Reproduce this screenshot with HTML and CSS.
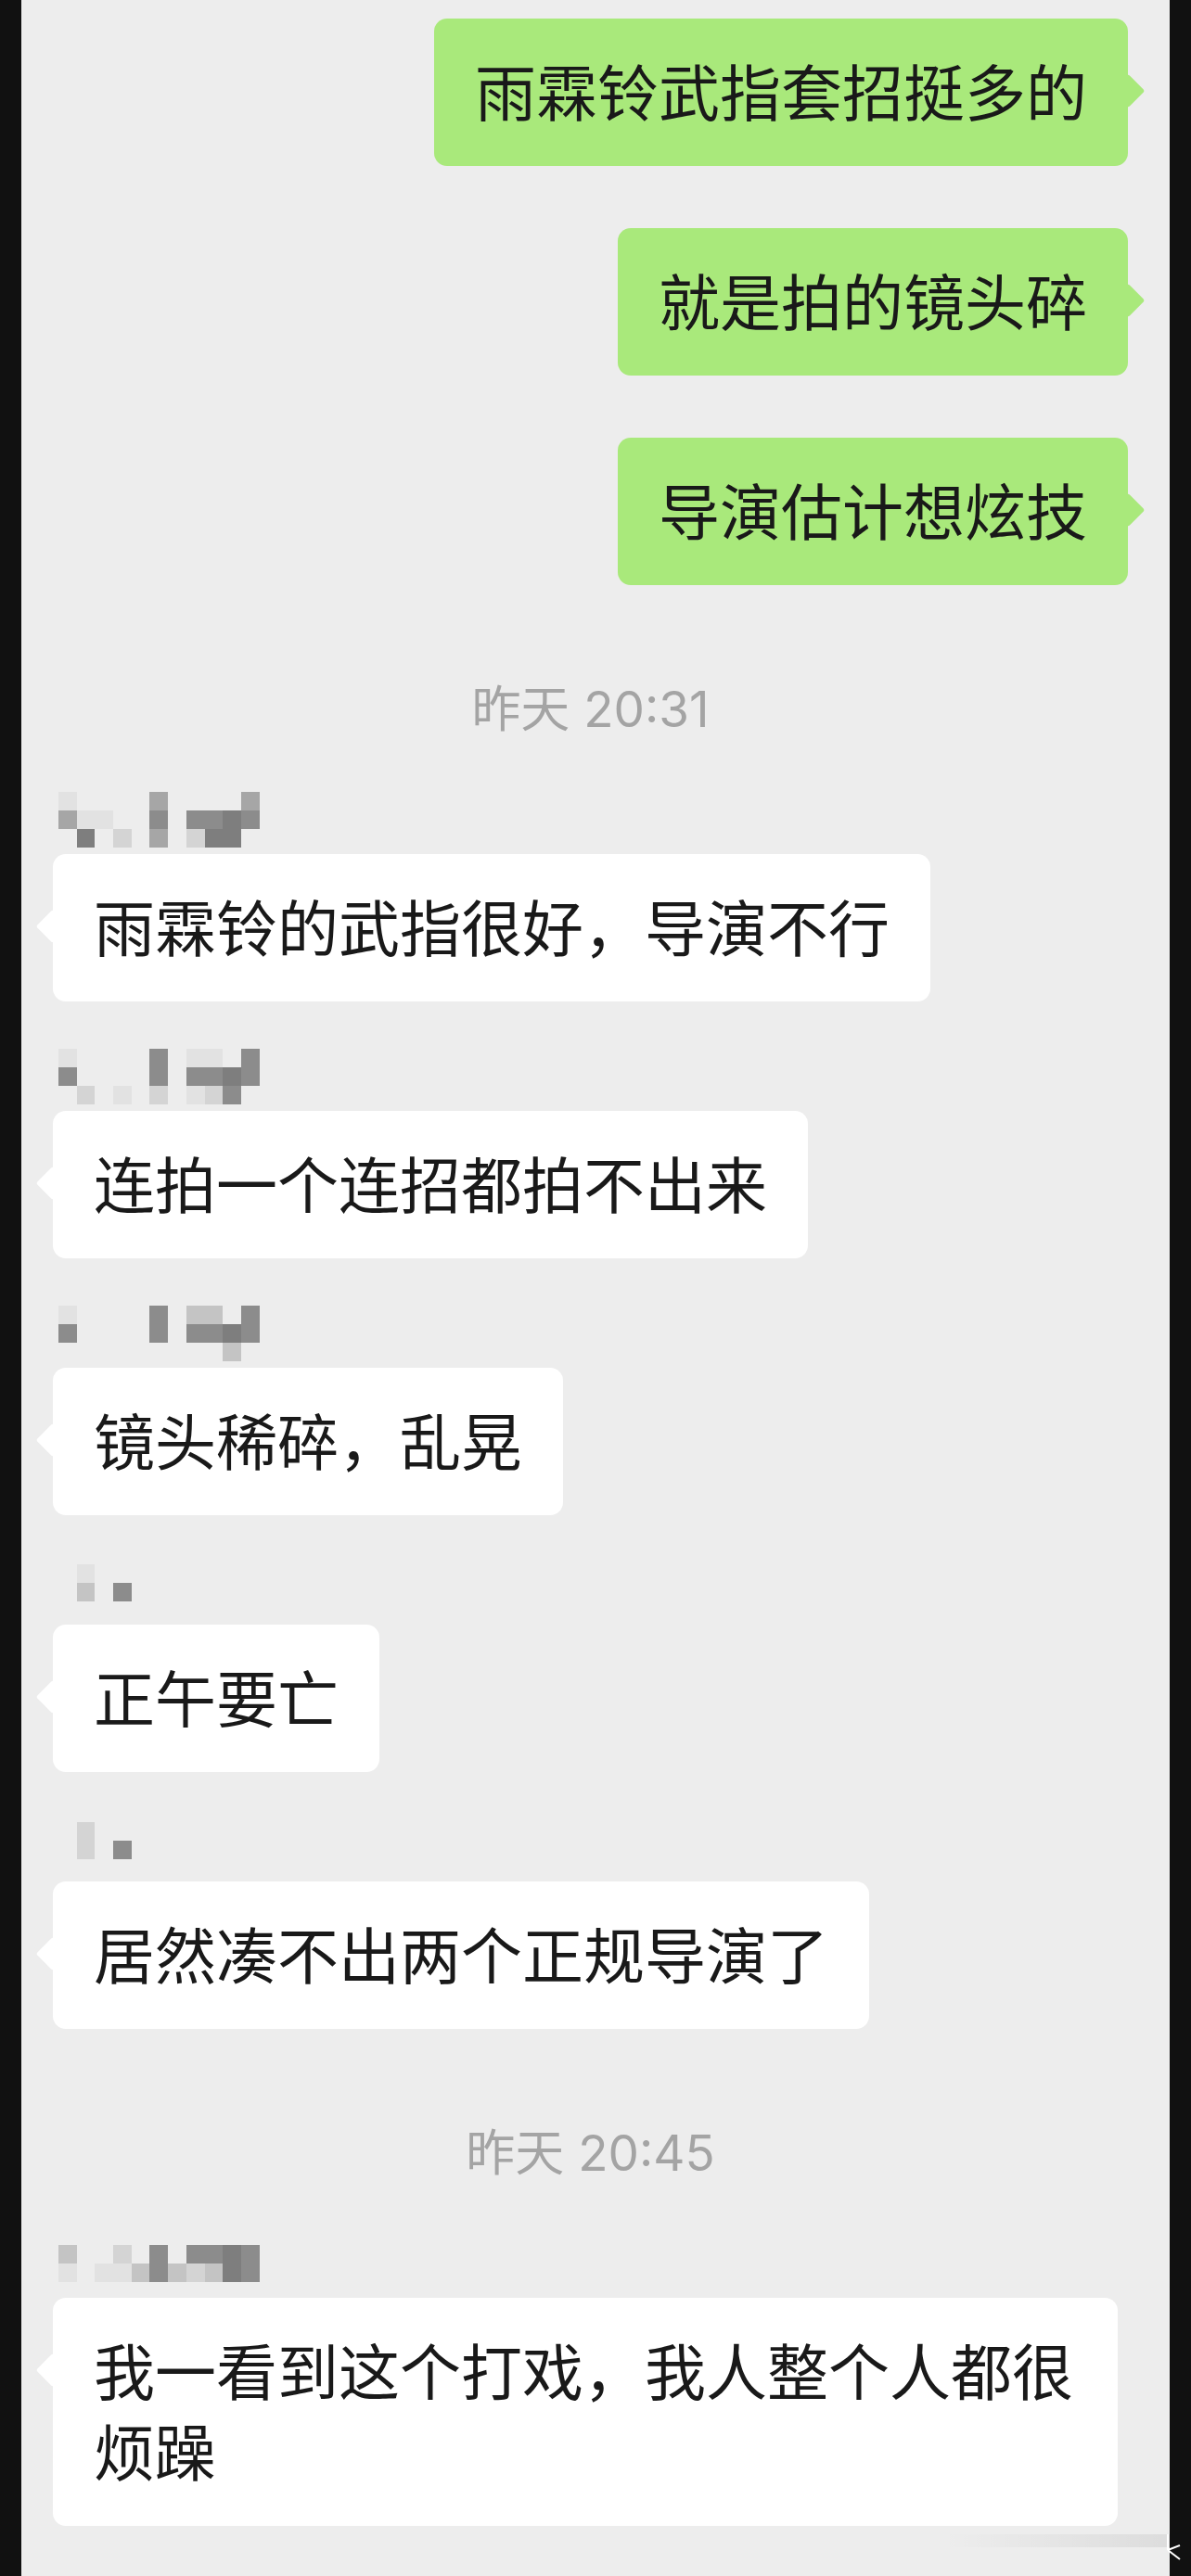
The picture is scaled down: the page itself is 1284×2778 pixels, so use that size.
FILE: index.html
```html
<!DOCTYPE html>
<html lang="zh-CN">
<head>
<meta charset="utf-8">
<title>聊天记录</title>
<link rel="stylesheet" href="styles.css">
</head>
<body>
<div class="screen">
  <div class="chat">
    <div class="msg-out"><div class="bubble green">雨霖铃武指套招挺多的</div></div>
    <div class="msg-out"><div class="bubble green">就是拍的镜头碎</div></div>
    <div class="msg-out"><div class="bubble green">导演估计想炫技</div></div>

    <div class="time">昨天 20:31</div>

    <div class="msg-in">
      <div class="name">
        <span class="k1"></span><span></span><span></span><span></span><span></span><span class="k4"></span><span></span><span></span><span></span><span></span><span class="k4"></span>
        <span class="k4"></span><span class="k1"></span><span class="k1"></span><span></span><span></span><span class="k5"></span><span></span><span class="k5"></span><span class="k5"></span><span class="k6"></span><span class="k5"></span>
        <span></span><span class="k6"></span><span></span><span class="k2"></span><span></span><span class="k4"></span><span></span><span class="k2"></span><span class="k6"></span><span class="k6"></span><span></span>
      </div>
      <div class="bubble white">雨霖铃的武指很好，导演不行</div>
    </div>

    <div class="msg-in">
      <div class="name">
        <span class="k1"></span><span></span><span></span><span></span><span></span><span class="k5"></span><span></span><span class="k1"></span><span class="k1"></span><span></span><span class="k5"></span>
        <span class="k5"></span><span></span><span></span><span></span><span></span><span class="k5"></span><span></span><span class="k5"></span><span class="k5"></span><span class="k6"></span><span class="k5"></span>
        <span></span><span class="k2"></span><span></span><span class="k1"></span><span></span><span class="k2"></span><span></span><span class="k1"></span><span class="k2"></span><span class="k5"></span><span></span>
      </div>
      <div class="bubble white">连拍一个连招都拍不出来</div>
    </div>

    <div class="msg-in">
      <div class="name">
        <span class="k1"></span><span></span><span></span><span></span><span></span><span class="k5"></span><span></span><span class="k3"></span><span class="k3"></span><span></span><span class="k5"></span>
        <span class="k5"></span><span></span><span></span><span></span><span></span><span class="k5"></span><span></span><span class="k5"></span><span class="k5"></span><span class="k6"></span><span class="k5"></span>
        <span></span><span></span><span></span><span></span><span></span><span></span><span></span><span></span><span></span><span class="k3"></span><span></span>
      </div>
      <div class="bubble white">镜头稀碎，乱晃</div>
    </div>

    <div class="msg-in">
      <div class="name off2">
        <span></span><span class="k1"></span><span></span><span></span><span></span><span></span><span></span><span></span><span></span><span></span><span></span>
        <span></span><span class="k3"></span><span></span><span class="k5"></span><span></span><span></span><span></span><span></span><span></span><span></span><span></span>
      </div>
      <div class="bubble white">正午要亡</div>
    </div>

    <div class="msg-in">
      <div class="name off3">
        <span></span><span class="k2"></span><span></span><span></span><span></span><span></span><span></span><span></span><span></span><span></span><span></span>
        <span></span><span class="k2"></span><span></span><span class="k5"></span><span></span><span></span><span></span><span></span><span></span><span></span><span></span>
      </div>
      <div class="bubble white">居然凑不出两个正规导演了</div>
    </div>

    <div class="time">昨天 20:45</div>

    <div class="msg-in">
      <div class="name off10">
        <span class="k3"></span><span></span><span></span><span class="k2"></span><span></span><span class="k5"></span><span></span><span class="k5"></span><span class="k5"></span><span class="k6"></span><span class="k5"></span>
        <span class="k1"></span><span></span><span class="k1"></span><span class="k1"></span><span class="k3"></span><span class="k5"></span><span class="k3"></span><span class="k2"></span><span class="k3"></span><span class="k6"></span><span class="k5"></span>
      </div>
      <div class="bubble white">我一看到这个打戏，我人整个人都很烦躁</div>
    </div>
  </div>
  <div class="ghost-bar"></div>
</div>
<svg class="edge-mark" width="16" height="30" viewBox="0 0 16 30" aria-hidden="true">
  <path d="M2 0 V17 M2 17 L15 12 M2 17 L15 27" stroke="#ffffff" stroke-width="2" fill="none"/>
</svg>
</body>
</html>
```
FILE: styles.css
```css
html, body {
  margin: 0;
  padding: 0;
}

body {
  position: relative;
  background: #111111;
  width: 1284px;
  height: 2778px;
  overflow: hidden;
}

.screen {
  position: relative;
  margin: 0 23px;
  height: 2778px;
  background: #ededed;
  overflow: hidden;
}

.chat {
  display: flex;
  flex-direction: column;
  padding: 20px 45px 0 34px;
}

.msg-out {
  align-self: flex-end;
}

.msg-out + .msg-out {
  margin-top: 67px;
}

.time {
  margin-top: 104px;
  text-align: center;
  font-family: "Inter", "Noto Sans CJK SC", sans-serif;
  font-size: 53px;
  line-height: 60px;
  color: #a4a4a4;
}

.msg-in {
  align-self: flex-start;
  display: flex;
  flex-direction: column;
  align-items: flex-start;
}

.time + .msg-in {
  margin-top: 59px;
}

.msg-in + .msg-in {
  margin-top: 51px;
}

.bubble {
  position: relative;
  max-width: 1060px;
  padding: 33px 44px 39px;
  border-radius: 14px;
  font-family: "Noto Sans CJK SC", sans-serif;
  font-size: 66px;
  line-height: 87px;
  color: #191919;
}

.bubble::before {
  content: "";
  position: absolute;
  top: 65px;
  width: 26px;
  height: 26px;
  background: inherit;
  border-radius: 3px;
  transform: rotate(45deg);
}

.green {
  background: #a9e97b;
}

.green::before {
  right: -13px;
}

.white {
  background: #ffffff;
}

.white::before {
  left: -13px;
}

.name {
  box-sizing: border-box;
  display: grid;
  grid-template-columns: repeat(11, 19.7px);
  grid-auto-rows: 20px;
  height: 60px;
  margin: 0 0 7px 6px;
}

.name.off2 { padding-top: 2px; }
.name.off3 { padding-top: 3px; }
.name.off10 { padding-top: 10px; }

.k1 { background: #e2e2e2; }
.k2 { background: #d4d4d4; }
.k3 { background: #c4c4c4; }
.k4 { background: #a6a6a6; }
.k5 { background: #8c8c8c; }
.k6 { background: #7e7e7e; }

.ghost-bar {
  position: absolute;
  left: 994px;
  right: 0;
  top: 2733px;
  height: 14px;
  background: linear-gradient(to right, rgba(0, 0, 0, 0), rgba(0, 0, 0, 0.07));
}

.edge-mark {
  position: absolute;
  left: 1257px;
  top: 2733px;
}
```
